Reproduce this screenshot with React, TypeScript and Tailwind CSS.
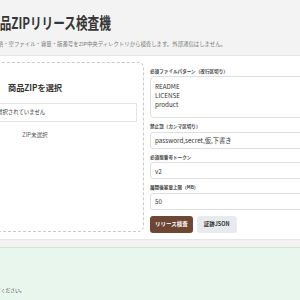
import React from "react";

const jp = { fontFamily: '"Noto Sans CJK JP", "Noto Sans", sans-serif' };

function Label({ children, className = "" }: { children: React.ReactNode; className?: string }) {
  return (
    <div className={`text-[4.6px] leading-[6px] h-[6px] font-bold text-[#444] whitespace-nowrap ${className}`}>
      {children}
    </div>
  );
}

function Field({ value, className = "" }: { value: string; className?: string }) {
  return (
    <div
      className={`h-[17px] border border-[#dcdfe3] rounded-[3px] bg-white flex items-center pl-[4px] pt-[2px] text-[6.3px] text-[#333] whitespace-nowrap ${className}`}
    >
      {value}
    </div>
  );
}

export default function App() {
  return (
    <div className="w-[300px] h-[300px] overflow-hidden bg-[#f3f3f3]" style={jp}>
      <div className="w-[480px] -ml-[80px]">
        <header className="pt-[11px] pl-[68px] h-[55px]">
          <h1 className="text-[15.5px] leading-[22px] font-bold text-[#363636] whitespace-nowrap origin-left scale-x-[0.75]">
            商品ZIPリリース検査機
          </h1>
          <p className="mt-[7.5px] text-[5.4px] leading-[7px] text-[#7a7a7a] whitespace-nowrap -ml-[1px]">
            禁止語・空ファイル・容量・版番号をZIP中央ディレクトリから検査します。外部通信はしません。
          </p>
        </header>

        <section className="bg-white border-t border-b border-[#e6e6e6] p-[6px] grid grid-cols-[218px_1fr] gap-[6px]">
          <div className="h-[170px] border border-dashed border-[#c4cbd2] rounded-[6px] flex flex-col items-center pt-[17px]">
            <div className="text-[8.2px] leading-[14px] font-bold text-[#333] whitespace-nowrap">
              商品ZIPを選択
            </div>
            <div className="mt-[8.5px] w-[204px] h-[19px] border border-[#e2e4e6] bg-white flex items-center text-[5.4px] text-[#333] whitespace-nowrap">
              <span className="ml-[63px]">選択されていません</span>
            </div>
            <div className="mt-[6px] text-[5.6px] leading-[14px] text-[#555] whitespace-nowrap">ZIP未選択</div>
          </div>

          <div className="flex flex-col pt-[6px]">
            <Label>必須ファイルパターン（改行区切り）</Label>
            <div className="mt-[2px] h-[42px] border border-[#dcdfe3] rounded-[4px] bg-white pl-[4px] pt-[4.5px] text-[6.3px] leading-[9px] text-[#333]">
              <div>README</div>
              <div>LICENSE</div>
              <div>product</div>
            </div>
            <Label className="mt-[5px]">禁止語（カンマ区切り）</Label>
            <Field className="mt-[2.5px]" value="password,secret,仮,下書き" />
            <Label className="mt-[5px]">必須版番号トークン</Label>
            <Field className="mt-[2.5px]" value="v2" />
            <Label className="mt-[5px]">展開後容量上限（MB）</Label>
            <Field className="mt-[2.5px]" value="50" />
            <div className="mt-[6px] flex gap-[4px]">
              <button className="h-[17px] px-[5px] rounded-[3px] bg-[#6e4634] text-white text-[5.5px] font-bold whitespace-nowrap">
                リリース検査
              </button>
              <button className="h-[17px] px-[7px] rounded-[3px] bg-[#e7ebee] text-[#333] text-[5.5px] font-bold whitespace-nowrap">
                証跡JSON
              </button>
            </div>
          </div>
        </section>

        <section className="mt-[7px] h-[60px] bg-[#e9f6ed] border-t border-[#cfe5d6] pl-[40px] pt-[38px]">
          <p className="text-[4.8px] leading-[7px] text-[#444] whitespace-nowrap">商品ZIPを選択してください。</p>
        </section>
      </div>
    </div>
  );
}
